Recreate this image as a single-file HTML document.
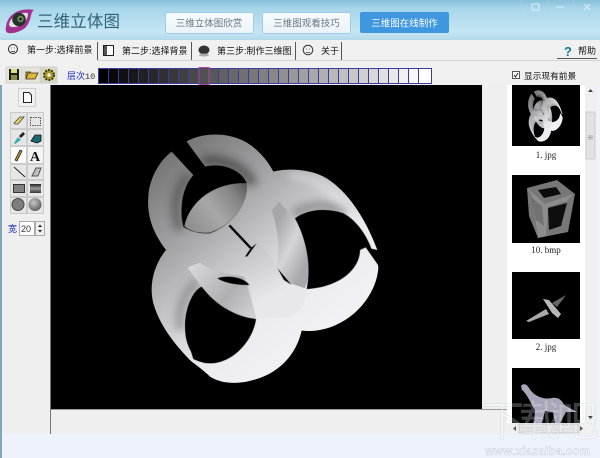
<!DOCTYPE html>
<html><head><meta charset="utf-8">
<style>
html,body{margin:0;padding:0;background:#eef3fb;width:600px;height:458px;overflow:hidden}
svg{display:block}
text{font-family:"Liberation Sans","Noto Sans CJK SC",sans-serif}
.t{font-size:9px;fill:#111}
.b{font-size:9.5px;fill:#66757f;text-anchor:middle}
.c{font-family:"Liberation Serif","Noto Sans CJK SC",serif;font-size:9px;fill:#222;text-anchor:middle}
</style></head><body>
<svg width="600" height="458" viewBox="0 0 600 458" xmlns="http://www.w3.org/2000/svg">
<defs>
<linearGradient id="hd" x1="0" y1="0" x2="0" y2="1"><stop offset="0" stop-color="#86bfd8"/><stop offset=".2" stop-color="#a6d5e9"/><stop offset=".8" stop-color="#c6e6f4"/><stop offset="1" stop-color="#b3d9ea"/></linearGradient>
<linearGradient id="bio" gradientUnits="userSpaceOnUse" x1="110" y1="90" x2="560" y2="640"><stop offset="0" stop-color="#737373"/><stop offset=".35" stop-color="#a6a6a8"/><stop offset=".6" stop-color="#d0d0d4"/><stop offset=".8" stop-color="#ecebf0"/><stop offset="1" stop-color="#f1f0f4"/></linearGradient>
<linearGradient id="inn" gradientUnits="userSpaceOnUse" x1="170" y1="330" x2="340" y2="190"><stop offset="0" stop-color="#8c8c8c"/><stop offset=".45" stop-color="#a8a8a8"/><stop offset=".8" stop-color="#858585"/><stop offset="1" stop-color="#5e5e5e"/></linearGradient>
<linearGradient id="ws" gradientUnits="userSpaceOnUse" x1="425" y1="340" x2="545" y2="400"><stop offset="0" stop-color="#a6a6aa"/><stop offset=".5" stop-color="#d6d6da"/><stop offset="1" stop-color="#a8a8ac"/></linearGradient>
<linearGradient id="btm" gradientUnits="userSpaceOnUse" x1="190" y1="430" x2="360" y2="590"><stop offset="0" stop-color="#d8d8db"/><stop offset=".6" stop-color="#b0b0b3"/><stop offset="1" stop-color="#d0d0d2"/></linearGradient>
<linearGradient id="yp" gradientUnits="userSpaceOnUse" x1="350" y1="390" x2="425" y2="530"><stop offset="0" stop-color="#c4c4c8"/><stop offset="1" stop-color="#e8e7ec"/></linearGradient>
<filter id="bl" x="-30%" y="-30%" width="160%" height="160%"><feGaussianBlur stdDeviation="12"/></filter>
<linearGradient id="bb" x1="0" y1="0" x2="0" y2="1"><stop offset="0" stop-color="#f8fbfd"/><stop offset="1" stop-color="#ebf4fa"/></linearGradient>
<radialGradient id="ball" cx=".4" cy=".35" r=".7"><stop offset="0" stop-color="#c8c8c8"/><stop offset="1" stop-color="#5a5a5a"/></radialGradient>
<linearGradient id="gr" x1="0" y1="0" x2="0" y2="1"><stop offset="0" stop-color="#222"/><stop offset=".5" stop-color="#999"/><stop offset="1" stop-color="#333"/></linearGradient>
<clipPath id="sil"><path d="M168,65C215,38 290,35 345,65C385,87 415,125 430,155C470,145 540,145 590,175C650,212 705,290 742,390L745,445C740,510 690,590 600,622C570,632 540,635 515,632C500,700 450,760 370,780C320,795 270,790 240,770C225,755 205,740 185,725C140,680 90,620 70,550C55,490 75,430 108,390C70,340 50,290 55,230C57,180 85,125 125,95L190,165L225,140Z"/></clipPath>
<g id="shape">
<path fill="url(#bio)" d="M168,65C215,38 290,35 345,65C385,87 415,125 430,155C470,145 540,145 590,175C650,212 705,290 742,390L745,445C740,510 690,590 600,622C570,632 540,635 515,632C500,700 450,760 370,780C320,795 270,790 240,770C225,755 205,740 185,725C140,680 90,620 70,550C55,490 75,430 108,390C70,340 50,290 55,230C57,180 85,125 125,95L190,165L225,140Z"/>
<g clip-path="url(#sil)">
<g filter="url(#bl)" fill="none">
<path stroke="#303032" stroke-width="34" opacity=".55" d="M215,125C290,110 350,150 368,195"/>
<path stroke="#303032" stroke-width="30" opacity=".45" d="M180,165C130,210 130,280 150,330"/>
<path stroke="#78787c" stroke-width="34" opacity=".6" d="M490,285C535,250 600,250 650,280"/>
<path stroke="#78787c" stroke-width="30" opacity=".55" d="M150,630C145,560 165,510 205,485"/>
<path stroke="#fff" stroke-width="20" opacity=".35" d="M480,170C560,165 640,230 700,340"/>
</g>
</g>
<path fill="url(#ws)" d="M425,270L447,245C490,290 540,360 540,430C540,460 532,490 525,505L480,490L440,440C452,380 442,320 425,270Z"/>
<path fill="url(#btm)" d="M172,442L210,428C240,452 290,462 345,470L380,597C320,590 250,560 215,500C200,480 185,460 172,442Z"/>
<path fill="url(#yp)" d="M305,422L345,410L380,370L412,395C430,425 455,465 480,490C500,500 515,505 530,507L520,560L480,590L378,597C375,540 345,455 305,422Z"/>
<!-- holes -->
<path fill="#000" d="M125,92L168,62L225,140C290,125 340,160 350,190C355,240 320,310 240,340C210,342 180,335 160,320C150,280 150,210 190,165Z"/>
<path fill="url(#inn)" d="M163,318C180,240 260,185 350,190C355,240 320,310 240,338C210,340 180,335 163,318Z"/>
<path fill="#000" d="M495,295C530,268 590,262 640,280C680,300 712,350 724,386L746,391L749,442L707,382L690,390C690,440 640,500 530,507C545,440 530,360 495,295Z"/>
<path fill="#000" d="M165,620C165,560 190,510 215,500C260,560 320,590 378,597C370,660 310,730 240,730C222,730 205,724 190,717L183,695C170,670 165,650 165,620Z"/>
<path fill="#000" d="M262,475C290,465 340,470 358,495C320,495 285,490 262,475Z"/>
<path fill="none" stroke="#000" stroke-width="7" d="M298,316L362,384"/>
<path fill="#000" d="M345,410L362,384L380,370L352,409Z"/>
<path fill="#000" d="M442,444L484,494L462,480Z"/>
</g>
</defs>

<rect width="600" height="458" fill="#eef3fb"/>
<rect width="600" height="40" fill="url(#hd)"/>
<rect y="40" width="600" height="394" fill="#efefef"/>
<rect x="0" y="40" width="2" height="418" fill="#7fa6ba"/>
<rect x="597" y="40" width="3" height="418" fill="#eef3fb"/>

<!-- logo -->
<path d="M6,27C7,15 19,7 34,10C30,12 32,20 26,27C21,32 12,34 8,33C6,32 5,30 6,27Z" fill="#a2318e"/>
<path d="M9,25C10,17 18,12 28,13C28,20 23,26 15,27C12,27.500 10,27 9,25Z" fill="#dfe3e2"/>
<circle cx="19" cy="19.500" r="6.800" fill="#27332b"/>
<circle cx="20.500" cy="19" r="3.200" fill="#6d8f5c"/>
<circle cx="20.500" cy="19" r="1.300" fill="#111"/>
<text x="37" y="27" font-size="16.500" fill="#2f6278" textLength="83">三维立体图</text>

<!-- top buttons -->
<rect x="165.500" y="12.500" width="88" height="21" rx="2" fill="url(#bb)" stroke="#9fcbe6"/>
<rect x="262.500" y="12.500" width="88" height="21" rx="2" fill="url(#bb)" stroke="#9fcbe6"/>
<rect x="360" y="12" width="89" height="21" rx="2" fill="#3f97e0"/>
<text class="b" x="209" y="26.500">三维立体图欣赏</text>
<text class="b" x="306.500" y="26.500">三维图观看技巧</text>
<text class="b" x="404.500" y="26.500" style="fill:#fff">三维图在线制作</text>

<!-- window buttons -->
<g stroke="#e8f4fa" fill="none" opacity=".85"><rect x="532" y="4" width="7" height="6"/><path d="M556,7H564M584,4L590,10M590,4L584,10"/></g>
<path d="M521,0V12M548,0V12M574,0V12" stroke="#a5d2e6" opacity=".6"/>

<!-- tabs -->
<rect y="40" width="600" height="21" fill="#f0f0f0"/>
<circle cx="13" cy="49" r="4.500" fill="none" stroke="#222"/><path d="M11,48H11.800M14,48H14.800M11,51C12,52 14,52 15,51" stroke="#222" fill="none" stroke-width=".8"/>
<text class="t" x="27" y="53">第一步:选择前景</text>
<path d="M97.500,42V60M191.500,42V60M295.500,42V60M341.500,42V60" stroke="#555"/>
<path d="M97,60.500H600" stroke="#d4d4d4"/>
<rect x="103.500" y="45.500" width="10" height="10" fill="#fff" stroke="#222"/><rect x="104" y="46" width="3" height="9" fill="#555"/>
<text class="t" x="122" y="54">第二步:选择背景</text>
<ellipse cx="204" cy="50" rx="5.500" ry="4.500" fill="#333"/><ellipse cx="204" cy="55" rx="5" ry="1.500" fill="#aaa"/>
<text class="t" x="217" y="54">第三步:制作三维图</text>
<circle cx="308" cy="50" r="4.800" fill="none" stroke="#333"/><path d="M306,49H306.800M309,49H309.800M306,52C307,53 309,53 310,52" stroke="#333" fill="none" stroke-width=".8"/>
<text class="t" x="321" y="54">关于</text>
<text x="564" y="56" font-size="13" font-weight="bold" style="font-family:'Liberation Sans',sans-serif" fill="#127a96">?</text>
<text class="t" x="578" y="54">帮助</text>
<path d="M557,58.500H597" stroke="#555"/>

<!-- toolbar -->
<rect y="61" width="600" height="24" fill="#f0f0f0"/>
<rect x="6" y="67" width="16" height="16" fill="#e4e4d8" stroke="#cfcfcf"/>
<rect x="9" y="69" width="10" height="11" fill="#1d1d10"/><rect x="11" y="69" width="6" height="4" fill="#dcdc90"/><rect x="11" y="75" width="6" height="5" fill="#8a8a50"/>
<rect x="24" y="67" width="16" height="16" fill="#e4e4d8" stroke="#cfcfcf"/>
<path d="M26,79L28,73H38L35,79ZM26,79V72H31" fill="#d8b83a" stroke="#3a3010" stroke-width=".8"/>
<rect x="41" y="67" width="16" height="16" fill="#d8d8c0" stroke="#cfcfcf"/>
<circle cx="49" cy="75" r="5" fill="#a89a20" stroke="#3a3410" stroke-width="2" stroke-dasharray="2 1.200"/><circle cx="49" cy="75" r="1.800" fill="#eee"/>
<text x="67" y="79" font-size="9" fill="#2030c0">层次</text>
<text x="85" y="79" font-size="8.500" style="font-family:'Liberation Mono',monospace" fill="#333">10</text>

<!-- level bar -->
<rect x="98" y="68.500" width="334" height="15" fill="#000"/>
<g stroke="#3c3c9c" stroke-width="1">
<rect x="98.500" y="68.500" width="10" height="15" fill="#000"/><rect x="108.500" y="68.500" width="10" height="15" fill="#080808"/><rect x="118.500" y="68.500" width="10" height="15" fill="#101010"/><rect x="128.500" y="68.500" width="10" height="15" fill="#181818"/><rect x="138.500" y="68.500" width="10" height="15" fill="#202020"/><rect x="148.500" y="68.500" width="10" height="15" fill="#282828"/><rect x="158.500" y="68.500" width="10" height="15" fill="#303030"/><rect x="168.500" y="68.500" width="10" height="15" fill="#383838"/><rect x="178.500" y="68.500" width="10" height="15" fill="#404040"/><rect x="188.500" y="68.500" width="10" height="15" fill="#484848"/><rect x="198.500" y="68.500" width="10" height="15" fill="#505050"/><rect x="208.500" y="68.500" width="10" height="15" fill="#585858"/><rect x="218.500" y="68.500" width="10" height="15" fill="#606060"/><rect x="228.500" y="68.500" width="10" height="15" fill="#686868"/><rect x="238.500" y="68.500" width="10" height="15" fill="#707070"/><rect x="248.500" y="68.500" width="10" height="15" fill="#787878"/><rect x="258.500" y="68.500" width="10" height="15" fill="#808080"/><rect x="268.500" y="68.500" width="10" height="15" fill="#888888"/><rect x="278.500" y="68.500" width="10" height="15" fill="#909090"/><rect x="288.500" y="68.500" width="10" height="15" fill="#989898"/><rect x="298.500" y="68.500" width="10" height="15" fill="#a0a0a0"/><rect x="308.500" y="68.500" width="10" height="15" fill="#a8a8a8"/><rect x="318.500" y="68.500" width="10" height="15" fill="#b0b0b0"/><rect x="328.500" y="68.500" width="10" height="15" fill="#b8b8b8"/><rect x="338.500" y="68.500" width="10" height="15" fill="#c0c0c0"/><rect x="348.500" y="68.500" width="10" height="15" fill="#c8c8c8"/><rect x="358.500" y="68.500" width="10" height="15" fill="#d0d0d0"/><rect x="368.500" y="68.500" width="10" height="15" fill="#d8d8d8"/><rect x="378.500" y="68.500" width="10" height="15" fill="#e0e0e0"/><rect x="388.500" y="68.500" width="10" height="15" fill="#e8e8e8"/><rect x="398.500" y="68.500" width="10" height="15" fill="#f0f0f0"/><rect x="408.500" y="68.500" width="10" height="15" fill="#f8f8f8"/><rect x="418.500" y="68.500" width="13" height="15" fill="#fff"/>
</g>
<rect x="199" y="67.500" width="10" height="17" fill="#505050" stroke="#b040a8"/>

<rect x="512.500" y="71.500" width="7" height="7" fill="#fff" stroke="#555"/><path d="M514,75L515.500,77L518,73" stroke="#222" fill="none"/>
<text class="t" x="524" y="79" style="font-size:8.700px">显示现有前景</text>

<!-- left tools -->
<rect x="18.500" y="88.500" width="17" height="18" fill="#f2f2f2" stroke="#cfcfcf"/>
<path d="M23.500,92.500H29L31.500,95V102.500H23.500Z" fill="#fff" stroke="#222"/>
<g fill="#e6e6e6" stroke="#cbcbcb">
<rect x="10.500" y="112.500" width="16" height="16"/><rect x="27.500" y="112.500" width="16" height="16"/>
<rect x="10.500" y="129.500" width="16" height="16"/><rect x="27.500" y="129.500" width="16" height="16"/>
<rect x="10.500" y="146.500" width="16" height="17" fill="#fbfbfb"/><rect x="27.500" y="146.500" width="16" height="17" fill="#f4f4f4"/>
<rect x="10.500" y="164.500" width="16" height="15"/><rect x="27.500" y="164.500" width="16" height="15"/>
<rect x="10.500" y="180.500" width="16" height="16"/><rect x="27.500" y="180.500" width="16" height="16"/>
<rect x="10.500" y="197.500" width="16" height="16"/><rect x="27.500" y="197.500" width="16" height="16"/>
</g>
<path d="M14,123L20,117H24L18,124H15Z" fill="#e8d468" stroke="#444" stroke-width=".8"/>
<rect x="30.500" y="117.500" width="10" height="8" fill="none" stroke="#555" stroke-dasharray="1.500 1"/>
<path d="M14,143L18,137L21,140L15,144Z" fill="#3ab0a8"/><path d="M19,136L23,132L25,134L21,138Z" fill="#222"/>
<path d="M31,141L35,135H41V141L37,143Z" fill="#1a6a70" stroke="#111" stroke-width=".8"/>
<path d="M15,160L20,150L22,151L17,161Z" fill="#b88a30" stroke="#222" stroke-width=".8"/>
<text x="30" y="161" font-size="14" font-weight="bold" style="font-family:'Liberation Serif',serif" fill="#111">A</text>
<path d="M14,167L25,177" stroke="#222"/>
<path d="M32,176L36,168H41L38,176Z" fill="#c0c0c0" stroke="#555"/>
<rect x="13.500" y="184.500" width="11" height="8" fill="#808080" stroke="#333"/>
<rect x="30" y="184" width="11" height="9" fill="url(#gr)"/>
<circle cx="18" cy="204.500" r="6" fill="#7d7d7d" stroke="#444"/>
<circle cx="35" cy="204.500" r="6.500" fill="url(#ball)"/>
<text x="8" y="232" font-size="9" fill="#2030c0">宽</text>
<rect x="19.500" y="221.500" width="15" height="14" fill="#fff" stroke="#aaa"/>
<text x="21" y="232" font-size="9" style="font-family:'Liberation Sans',sans-serif" fill="#333">20</text>
<rect x="35.500" y="221.500" width="9" height="14" fill="#f0f0f0" stroke="#aaa"/>
<path d="M38,227L40,224.500L42,227ZM38,230L40,232.500L42,230Z" fill="#222"/>

<!-- canvas -->
<rect x="50" y="85" width="1" height="349" fill="#777"/>
<rect x="51" y="85" width="431" height="324" fill="#000"/>
<rect x="51" y="409" width="456" height="1" fill="#999"/>
<g transform="translate(130,120) scale(.33333)"><use href="#shape"/></g>

<!-- list -->
<rect x="507" y="85" width="78" height="338" fill="#fff"/>
<rect x="512" y="85" width="68" height="61" fill="#000"/>
<g transform="translate(525.400,87.200) scale(.05,.069)"><use href="#shape"/></g>
<text class="c" x="546" y="158">1. jpg</text>
<rect x="512" y="175" width="68" height="68" fill="#000"/>
<path d="M527,188L557,180L575,194L568,232L538,238L529,216Z" fill="#777"/>
<path d="M538,190L556,187L561,194L544,198Z" fill="#0c0c0c"/>
<path d="M548,208L567,203L561,226L549,230Z" fill="#0e0e0e"/>
<path d="M532,198L542,206L544,226L536,220Z" fill="#2a2a2a"/>
<path d="M527,188L545,204L573,194L567,201L548,207L546,236L538,238L532,196Z" fill="#9a9a9a" opacity=".65"/>
<text class="c" x="546" y="253">10. bmp</text>
<rect x="512" y="272" width="68" height="67" fill="#000"/>
<path d="M526,321L546,309L549,314L529,322Z" fill="#a8a8a8"/>
<path d="M543,299L552,313L558,318L561,314L549,300Z" fill="#b8b8b8"/>
<path d="M552,303L566,295L557,307Z" fill="#666"/>
<text class="c" x="546" y="350">2. jpg</text>
<rect x="512" y="368" width="68" height="55" fill="#000"/>
<path d="M521,386C523,383 527,384 529,388C534,396 543,400 552,398C558,397 562,400 564,405L577,412L566,412L560,423H555L553,412L545,411L542,423H534L535,410C530,402 527,394 522,390Z" fill="#aaa6ba"/>

<!-- scrollbars -->
<rect x="585" y="85" width="12" height="349" fill="#f0f0f0"/>
<rect x="586" y="112" width="9" height="47" fill="#e2e2e2" stroke="#bdbdbd" stroke-width=".6"/>
<path d="M588,136H593M588,137.500H593M588,139H593" stroke="#777" stroke-width=".6"/>
<path d="M588,92L590.500,89L593,92ZM588,416L590.500,419L593,416Z" fill="#444"/>
<rect x="507" y="423" width="90" height="11" fill="#f0f0f0"/>
<rect x="519" y="424" width="60" height="9" fill="#e2e2e2" stroke="#bdbdbd" stroke-width=".6"/>
<path d="M513,428.500L516,426V431ZM580,426L583,428.500L580,431Z" fill="#555"/>

<!-- watermark -->
<g opacity=".6">
<text x="482" y="436" font-size="42" fill="#ffffff" fill-opacity=".4" stroke="#9aa3ad" stroke-width=".5" stroke-opacity=".5" textLength="116">下载吧</text>
<text x="485" y="455" font-size="11.500" font-weight="bold" fill="#fff" stroke="#aab4c0" stroke-width=".5" textLength="105">www.xiazaiba.com</text>
</g>
</svg>
</body></html>
